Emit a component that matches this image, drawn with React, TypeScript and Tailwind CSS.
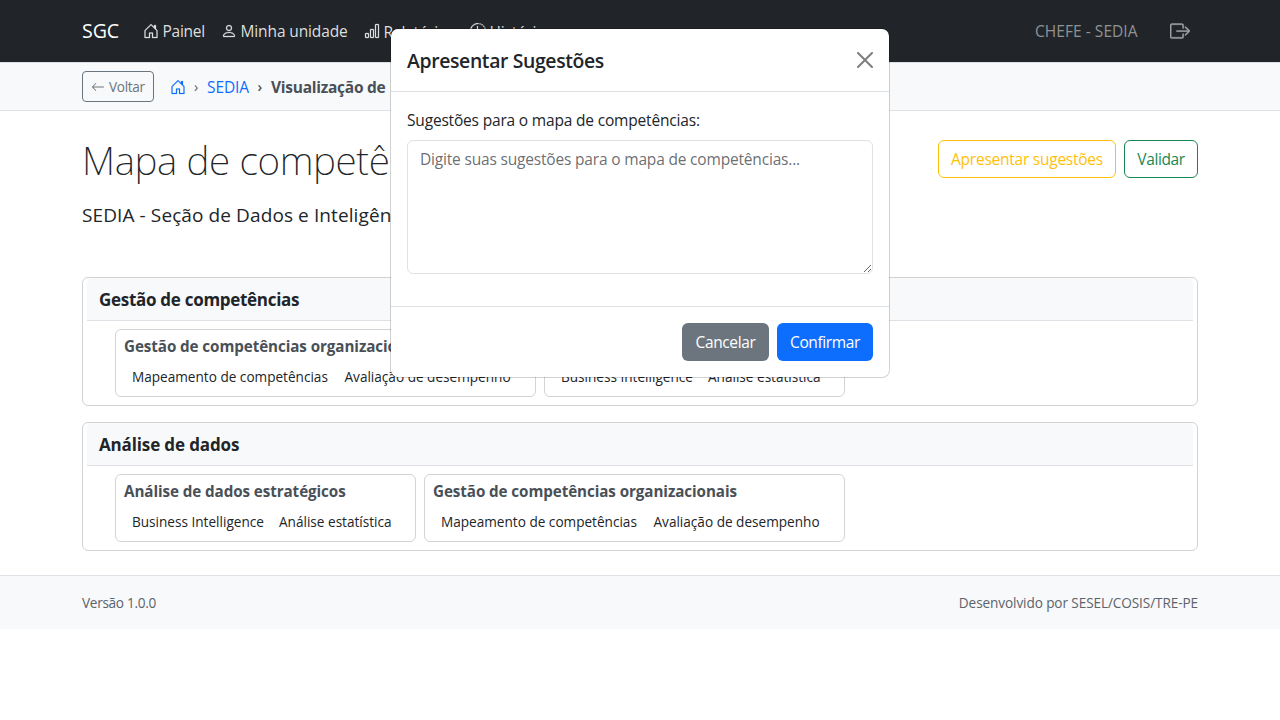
import React from "react";
import {
  BsArrowLeft,
  BsBarChart,
  BsBoxArrowRight,
  BsClockHistory,
  BsHouseDoor,
  BsPerson,
} from "react-icons/bs";

type Activity = { title: string; width: string; skills: { name: string; width: string }[] };

const management: Activity = {
  title: "Gestão de competências organizacionais",
  width: "w-[421px]",
  skills: [
    { name: "Mapeamento de competências", width: "w-[196.5px]" },
    { name: "Avaliação de desempenho", width: "w-[167px]" },
  ],
};

const analysis: Activity = {
  title: "Análise de dados estratégicos",
  width: "w-[301px]",
  skills: [
    { name: "Business Intelligence", width: "w-[131px]" },
    { name: "Análise estatística", width: "w-[112px]" },
  ],
};

function CompetencyCard({ title, titleClass, activities }: { title: string; titleClass: string; activities: Activity[] }) {
  return (
    <section className="h-[129px] rounded-md border border-[#d2d3d3] bg-white px-1">
      <h2 className={`h-[43px] rounded-t-[5px] border-b border-[#dee2e6] bg-[#f8f9fa] px-3 text-[17px] leading-[44px] font-bold ${titleClass}`}>
        {title}
      </h2>
      <div className="flex gap-2 pt-2 pl-7">
        {activities.map((a) => (
          <article key={a.title} className={`h-[68px] rounded-md border border-[#d2d3d3] px-2 ${a.width}`}>
            <h3 className="pt-1 text-[15.2px] leading-6 font-bold tracking-[-0.08px] text-[#495057]">{a.title}</h3>
            <ul className="mt-2 flex gap-4 pl-2 text-[13.6px] leading-[21px]">
              {a.skills.map((s) => (
                <li key={s.name} className={s.width}>{s.name}</li>
              ))}
            </ul>
          </article>
        ))}
      </div>
    </section>
  );
}

export default function App() {
  return (
    <div className="relative h-[720px] overflow-hidden bg-white font-['Open_Sans','Noto_Sans',sans-serif] text-[15.5px] leading-6 whitespace-nowrap text-[#212529]">
      <header className="h-[62px] bg-[#212529] px-[82px]">
        <nav className="flex h-full items-center text-[#dedede]">
          <span className="w-[60.5px] text-[19.6px] tracking-[-0.1px] text-white">SGC</span>
          <a className="flex w-[78px] items-center gap-1">
            <BsHouseDoor size={16} strokeWidth={0.25} />
            <span className="tracking-[-0.25px]">Painel</span>
          </a>
          <a className="flex w-[143px] items-center gap-1">
            <BsPerson size={16} strokeWidth={0.25} />
            <span className="tracking-[-0.12px]">Minha unidade</span>
          </a>
          <a className="flex w-[106px] items-center gap-1">
            <BsBarChart size={16} strokeWidth={0.25} />
            <span className="pt-0.5 tracking-[-0.17px]">Relatórios</span>
          </a>
          <a className="flex items-center gap-1">
            <BsClockHistory size={16} strokeWidth={0.25} />
            <span className="pt-0.5 tracking-[-0.17px]">Histórico</span>
          </a>
          <span className="ml-auto w-[135px] tracking-[0.05px] text-[#909294]">CHEFE - SEDIA</span>
          <BsBoxArrowRight size={20} strokeWidth={0.3} className="mr-2 text-[#a0a2a4]" />
        </nav>
      </header>

      <div className="flex h-[49px] items-center border-y border-[#dee2e6] bg-[#f8f9fa] px-[82px]">
        <button className="flex h-[31px] w-[72px] items-center gap-1 rounded border border-[#6c757d] px-2 text-[13.6px] tracking-[-0.3px] text-[#6c757d]">
          <BsArrowLeft size={14} />
          Voltar
        </button>
        <BsHouseDoor size={16} strokeWidth={0.2} className="ml-4 text-[#0d6efd]" />
        <span className="ml-2 w-[13px] pt-px text-[14px] text-[#5c636a]">›</span>
        <a className="w-[50.5px] tracking-[-0.1px] text-[#0d6efd]">SEDIA</a>
        <span className="w-[13.5px] pt-px text-[14px] font-semibold text-[#495057]">›</span>
        <span className="mr-[5px] font-bold tracking-[-0.26px] text-[#495057]">Visualização de</span>
        <span className="font-bold tracking-[-0.26px] text-[#495057]">mapa</span>
      </div>

      <main className="px-[82px]">
        <div className="flex pt-[29px]">
          <div className="flex-1">
            <h1 className="h-[44px] font-['Noto_Sans','Open_Sans',sans-serif] text-[38.8px] leading-[40px] font-extralight tracking-[-0.38px]">
              Mapa de competências
            </h1>
            <p className="mt-[16px] text-[19px] leading-[30px] tracking-[0.1px]">
              SEDIA - Seção de Dados e Inteligência Artificial
            </p>
          </div>
          <div className="flex gap-2 tracking-[-0.24px]">
            <button className="h-[38px] w-[178px] rounded-md border border-[#ffc107] text-[#ffc107]">Apresentar sugestões</button>
            <button className="h-[38px] w-[74px] rounded-md border border-[#198754] tracking-[-0.4px] text-[#198754]">Validar</button>
          </div>
        </div>
        <div className="mt-[47px] flex flex-col gap-4">
          <CompetencyCard title="Gestão de competências" titleClass="tracking-[-0.29px]" activities={[management, analysis]} />
          <CompetencyCard title="Análise de dados" titleClass="tracking-[-0.14px]" activities={[analysis, management]} />
        </div>
      </main>

      <footer className="mt-6 flex h-[54px] items-center justify-between border-t border-[#dee2e6] bg-[#f8f9fa] px-[82px] text-[13.6px] text-[#5c636a]">
        <span className="tracking-[-0.3px]">Versão 1.0.0</span>
        <span className="tracking-[-0.1px]">Desenvolvido por SESEL/COSIS/TRE-PE</span>
      </footer>

      <div role="dialog" className="absolute top-7 left-[390px] w-[500px] rounded-lg border border-black/[0.175] bg-white bg-clip-padding">
        <div className="flex h-[63px] items-center justify-between border-b border-[#dee2e6] px-4">
          <h5 className="pt-0.5 text-[19.4px] leading-[30px] font-semibold tracking-[-0.36px]">Apresentar Sugestões</h5>
          <svg width="16" height="16" viewBox="0 0 16 16" fill="#000" className="opacity-50">
            <path d="M.293.293a1 1 0 0 1 1.414 0L8 6.586 14.293.293a1 1 0 1 1 1.414 1.414L9.414 8l6.293 6.293a1 1 0 0 1-1.414 1.414L8 9.414l-6.293 6.293a1 1 0 0 1-1.414-1.414L6.586 8 .293 1.707a1 1 0 0 1 0-1.414" />
          </svg>
        </div>
        <div className="px-4 pt-4 pb-8 tracking-[-0.18px]">
          <label htmlFor="suggestions" className="mb-2 block">Sugestões para o mapa de competências:</label>
          <textarea
            id="suggestions"
            rows={5}
            placeholder="Digite suas sugestões para o mapa de competências..."
            className="block h-[134px] w-full resize-y rounded-md border border-[#dee2e6] px-3 py-1.5 placeholder:text-[#595c5f]/90"
          />
        </div>
        <div className="flex h-[71px] items-center justify-end gap-2 border-t border-[#dee2e6] px-4 tracking-[-0.38px] text-white">
          <button className="h-[38px] w-[87px] rounded-md bg-[#6c757d]">Cancelar</button>
          <button className="h-[38px] w-24 rounded-md bg-[#0d6efd]">Confirmar</button>
        </div>
      </div>
    </div>
  );
}
